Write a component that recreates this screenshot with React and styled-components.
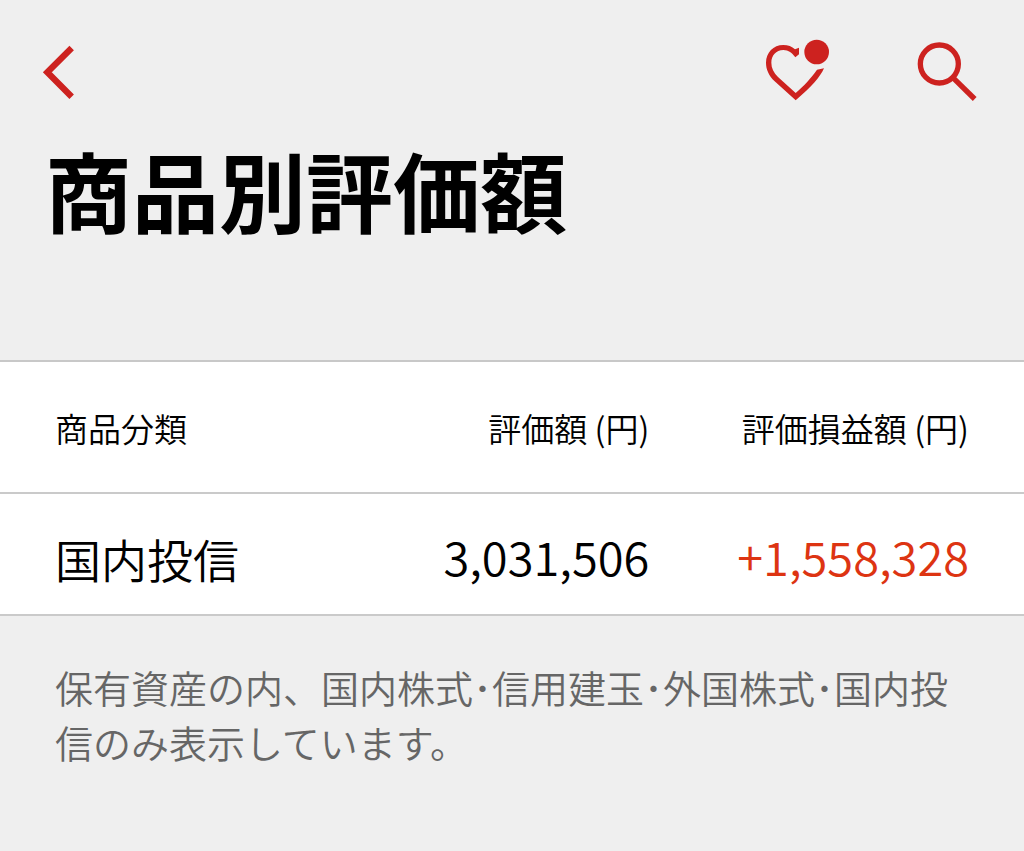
import styled, { createGlobalStyle } from "styled-components";

const GlobalStyle = createGlobalStyle`
  body {
    margin: 0;
    background-color: #efefef;
    color: #000;
    font-family: "Noto Sans CJK JP", "Noto Sans", sans-serif;
    font-weight: 350;
  }
`;

const Toolbar = styled.nav`
  display: flex;
  justify-content: space-between;
  padding: 36px 42px 29px 24px;
`;

const Actions = styled.div`
  display: flex;
  gap: 78px;
`;

const IconButton = styled.button`
  display: flex;
  padding: 0;
  border: none;
  background: none;
  color: #cd221f;
  cursor: pointer;

  svg {
    width: 72px;
    height: 72px;
  }
`;

const Title = styled.h1`
  margin: 0;
  padding: 0 45px 119px;
  font-size: 87px;
  font-weight: bold;
  line-height: 104px;
`;

const Table = styled.table`
  width: 100%;
  table-layout: fixed;
  border-collapse: separate;
  border-spacing: 0;
  background-color: white;
  border-top: 2px solid #c8c8c8;

  th,
  td {
    padding: 2px 6px 0;
    border-bottom: 2px solid #cacaca;
    font-weight: inherit;
    white-space: nowrap;
  }

  th:first-child {
    padding-left: 55px;
    text-align: left;
  }

  th:last-child,
  td:last-child {
    padding-right: 55px;
  }

  tbody th {
    padding-top: 8px;
  }

  tbody td {
    padding-top: 4px;
  }
`;

const Column = styled.col`
  width: ${(props) => props.$width};
`;

const HeadCell = styled.th`
  height: 128px;
  font-size: 33px;
  line-height: 48px;
  text-align: right;
`;

const NameCell = styled.th`
  height: 112px;
  font-size: 46px;
  line-height: 64px;
`;

const AmountCell = styled.td`
  font-size: 47px;
  line-height: 64px;
  text-align: right;
  color: ${(props) => (props.$gain ? "#dd3412" : "#000")};
`;

const Note = styled.p`
  margin: 0;
  padding: 43px 55px;
  color: #666;
  font-size: 38px;
  line-height: 55px;
`;

const BackIcon = () => (
  <svg viewBox="12 48 216 216" fill="none" aria-hidden="true">
    <path d="M155 84L82 157L155 230" stroke="currentColor" strokeWidth="19" />
  </svg>
);

const HeartIcon = () => (
  <svg viewBox="60 48 216 216" fill="currentColor" aria-hidden="true">
    <path d="M167 241L104 184C86 166 78 148 78 128C78 98 100 75 130 75C144 75 156 79 165 88L177 83L177 103L166 112C156 99 146 90 130 90C108 90 94 107 94 128C94 144 101 158 114 171L167 219C190 200 215 172 231 149L252 145C240 172 215 200 167 241Z" />
    <circle cx="230" cy="96" r="37" />
  </svg>
);

const SearchIcon = () => (
  <svg viewBox="60 48 216 216" fill="none" stroke="currentColor" aria-hidden="true">
    <circle cx="148" cy="132" r="57" strokeWidth="16" />
    <path d="M188 172L254 237" strokeWidth="16" />
  </svg>
);

const holdings = [
  { name: "国内投信", value: "3,031,506", profit: "+1,558,328" },
];

const App = () => {
  return (
    <main>
      <GlobalStyle />
      <header>
        <Toolbar>
          <IconButton type="button" aria-label="戻る">
            <BackIcon />
          </IconButton>
          <Actions>
            <IconButton type="button" aria-label="お気に入り">
              <HeartIcon />
            </IconButton>
            <IconButton type="button" aria-label="検索">
              <SearchIcon />
            </IconButton>
          </Actions>
        </Toolbar>
        <Title>商品別評価額</Title>
      </header>

      <Table>
        <colgroup>
          <Column $width="28%" />
          <Column $width="36%" />
          <Column $width="36%" />
        </colgroup>
        <thead>
          <tr>
            <HeadCell scope="col">商品分類</HeadCell>
            <HeadCell scope="col">評価額 (円)</HeadCell>
            <HeadCell scope="col">評価損益額 (円)</HeadCell>
          </tr>
        </thead>
        <tbody>
          {holdings.map((item) => (
            <tr key={item.name}>
              <NameCell scope="row">{item.name}</NameCell>
              <AmountCell>{item.value}</AmountCell>
              <AmountCell $gain>{item.profit}</AmountCell>
            </tr>
          ))}
        </tbody>
      </Table>

      <Note>
        保有資産の内、国内株式･信用建玉･外国株式･国内投信のみ表示しています。
      </Note>
    </main>
  );
};

export default App;
